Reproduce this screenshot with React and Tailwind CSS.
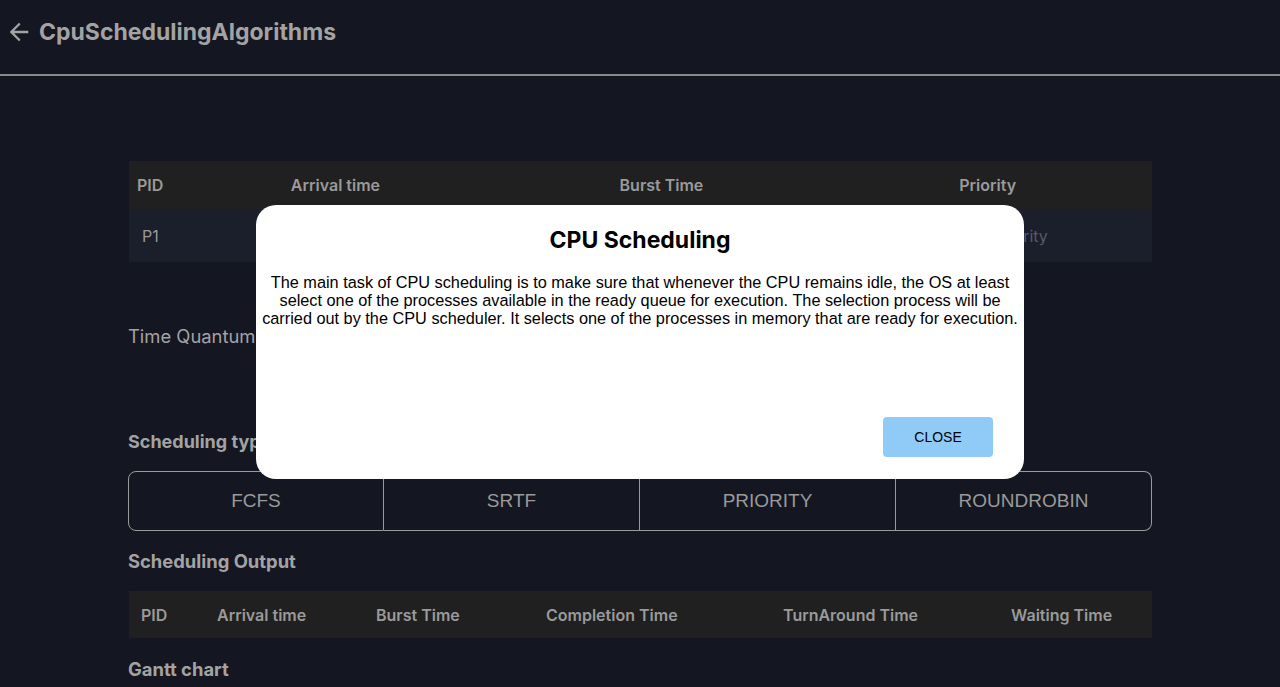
import React, { useState } from "react";
import { MdArrowBack } from "react-icons/md";

const inputCols = [
  { label: "PID", w: "w-[154px]" },
  { label: "Arrival time", w: "w-[329px]" },
  { label: "Burst Time", w: "w-[340px]" },
  { label: "Priority", w: "w-[201px]" },
];

const outputCols = [
  { label: "PID", w: "w-[76px]" },
  { label: "Arrival time", w: "w-[159px]" },
  { label: "Burst Time", w: "w-[170px]" },
  { label: "Completion Time", w: "w-[237px]" },
  { label: "TurnAround Time", w: "w-[228px]" },
  { label: "Waiting Time", w: "w-[153px]" },
];

const types = ["FCFS", "SRTF", "PRIORITY", "ROUNDROBIN"];

const App = () => {
  const [open, setOpen] = useState(true);
  const [selected, setSelected] = useState(null);

  return (
    <div className="min-h-screen bg-[#141621] font-['Inter',sans-serif] text-[#a3a3a3]">
      <div className="h-[76px] pb-[10px] flex items-center pl-[5px] border-b-2 border-[#8a8a8a]">
        <MdArrowBack size={28} className="text-[#a3a3a3]" />
        <h1 className="ml-[6px] text-[23px] font-bold">CpuSchedulingAlgorithms</h1>
      </div>

      <div className="w-[1024px] mx-auto pt-[85px]">
        <div className="w-[1023px] ml-[1px]">
          <div className="flex h-[48px] items-center bg-[#202020]">
            {inputCols.map((c) => (
              <div key={c.label} className={`${c.w} pl-[8px] text-[16px] font-semibold text-[#9a9a9a]`}>
                {c.label}
              </div>
            ))}
          </div>
          <div className="flex h-[53px] items-center bg-[#1b1e2b]">
            <div className="w-[154px] pl-[13px] text-[16px] text-[#9a9a9a]">P1</div>
            <div className="w-[329px] pl-[8px]">
              <input
                placeholder="Arrival time"
                className="w-[200px] bg-transparent outline-none text-[16px] placeholder-[#565a66]"
              />
            </div>
            <div className="w-[340px] pl-[8px]">
              <input
                placeholder="Burst Time"
                className="w-[200px] bg-transparent outline-none text-[16px] placeholder-[#565a66]"
              />
            </div>
            <div className="w-[201px] pl-[42px]">
              <input
                placeholder="Priority"
                className="w-[150px] bg-transparent outline-none text-[16px] placeholder-[#565a66]"
              />
            </div>
          </div>
        </div>

        <div className="mt-[47px] h-[56px] flex items-center gap-4">
          <span className="text-[18.4px] text-[#a3a3a3]">Time Quantum</span>
          <input className="w-[200px] bg-transparent outline-none text-[16px]" />
        </div>

        <h2 className="mt-[63px] h-[28px] leading-[28px] text-[18px] font-bold">Scheduling type</h2>
        <div className="mt-[15px] flex h-[60px] font-['Liberation_Sans',Arial,sans-serif]">
          {types.map((t, i) => (
            <button
              key={t}
              onClick={() => setSelected(t)}
              className={`w-[256px] h-full border border-[#9a9a9a] text-[19px] text-[#9a9a9a] ${
                i === 0 ? "rounded-l-[8px]" : "border-l-0"
              } ${i === types.length - 1 ? "rounded-r-[8px]" : ""} ${
                selected === t ? "bg-[#1f2230]" : "bg-transparent"
              }`}
            >
              {t}
            </button>
          ))}
        </div>

        <h2 className="mt-[16px] h-[28px] leading-[28px] text-[18.4px] font-bold">Scheduling Output</h2>
        <div className="mt-[16px] ml-[1px] flex h-[47px] items-center bg-[#202020]">
          {outputCols.map((c) => (
            <div key={c.label} className={`${c.w} pl-[12px] text-[16px] font-semibold text-[#9a9a9a]`}>
              {c.label}
            </div>
          ))}
        </div>

        <h2 className="mt-[17px] h-[28px] leading-[28px] text-[18.4px] font-bold">Gantt chart</h2>
      </div>

      {open && (
        <div className="fixed inset-0 flex justify-center pt-[205px]">
          <div className="w-[768px] h-[274px] bg-white rounded-[20px] flex flex-col text-black">
            <h2 className="mt-[21px] text-center text-[23px] leading-[28px] font-bold">CPU Scheduling</h2>
            <p className="mt-[19px] px-[4px] text-center text-[16.3px] leading-[18px] font-['Liberation_Sans',Arial,sans-serif]">
              The main task of CPU scheduling is to make sure that whenever the CPU remains idle, the OS at least
              select one of the processes available in the ready queue for execution. The selection process will be
              carried out by the CPU scheduler. It selects one of the processes in memory that are ready for execution.
            </p>
            <div className="mt-auto mb-[22px] mr-[31px] flex justify-end">
              <button
                onClick={() => setOpen(false)}
                className="w-[110px] h-[40px] rounded-[4px] bg-[#90cbf8] text-[14px] text-black font-['Liberation_Sans',Arial,sans-serif]"
              >
                CLOSE
              </button>
            </div>
          </div>
        </div>
      )}
    </div>
  );
};

export default App;
